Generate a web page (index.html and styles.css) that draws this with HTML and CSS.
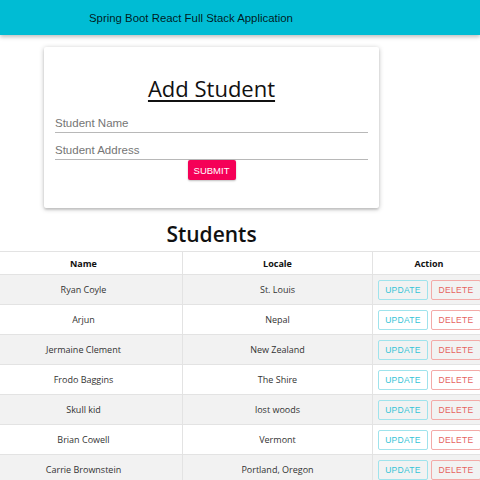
FILE: index.html
```html
<!DOCTYPE html>
<html>
<head>
<meta charset="utf-8">
<link rel="stylesheet" href="styles.css">
</head>
<body>
<header class="appbar">
  <span class="appbar-title">Spring Boot React Full Stack Application</span>
</header>
<main class="content">
  <section class="card">
    <h1 class="card-title">Add Student</h1>
    <div class="field"><span class="field-label">Student Name</span></div>
    <div class="field"><span class="field-label">Student Address</span></div>
    <div class="actions"><button class="submit">SUBMIT</button></div>
  </section>
  <h1 class="list-title">Students</h1>
</main>
<table class="students">
  <thead>
    <tr><th class="c-name">Name</th><th class="c-locale">Locale</th><th class="c-action">Action</th></tr>
  </thead>
  <tbody>
    <tr><td>Ryan Coyle</td><td>St. Louis</td><td class="btns"><button class="btn upd">UPDATE</button><button class="btn del">DELETE</button></td></tr>
    <tr><td>Arjun</td><td>Nepal</td><td class="btns"><button class="btn upd">UPDATE</button><button class="btn del">DELETE</button></td></tr>
    <tr><td>Jermaine Clement</td><td>New Zealand</td><td class="btns"><button class="btn upd">UPDATE</button><button class="btn del">DELETE</button></td></tr>
    <tr><td>Frodo Baggins</td><td>The Shire</td><td class="btns"><button class="btn upd">UPDATE</button><button class="btn del">DELETE</button></td></tr>
    <tr><td>Skull kid</td><td>lost woods</td><td class="btns"><button class="btn upd">UPDATE</button><button class="btn del">DELETE</button></td></tr>
    <tr><td>Brian Cowell</td><td>Vermont</td><td class="btns"><button class="btn upd">UPDATE</button><button class="btn del">DELETE</button></td></tr>
    <tr><td>Carrie Brownstein</td><td>Portland, Oregon</td><td class="btns"><button class="btn upd">UPDATE</button><button class="btn del">DELETE</button></td></tr>
  </tbody>
</table>
</body>
</html>
```
FILE: styles.css
```css
html, body { margin: 0; padding: 0; background: #fff; overflow: hidden; }
body { font-family: "Open Sans", "Noto Sans", sans-serif; color: #212121; }

.appbar {
  height: 35px;
  background: #00bcd4;
  box-shadow: 0 2px 4px rgba(0,0,0,0.25);
  display: flex;
  align-items: center;
  padding-left: 89px;
  position: relative;
}
.appbar-title {
  font-family: "Liberation Sans", Arial, sans-serif;
  font-size: 11.4px;
  color: rgba(0,0,0,0.87);
}

.content {
  width: 423px;
  padding-top: 12px;
}
.card {
  width: 335px;
  height: 161px;
  margin: 0 auto;
  box-sizing: border-box;
  background: #fff;
  border-radius: 2px;
  box-shadow: 0 1px 5px rgba(0,0,0,0.25), 0 2px 2px rgba(0,0,0,0.1);
  padding: 26px 11px 0 11px;
}
.card-title {
  margin: 0 0 7px 0;
  text-align: center;
  font-size: 22px;
  font-weight: 400;
  text-decoration: underline;
  text-underline-offset: 3px;
  line-height: 30px;
  color: #111;
}
.field {
  border-bottom: 1px solid #b8b8b8;
  height: 23px;
  width: 313px;
  display: flex;
  align-items: flex-end;
  padding-bottom: 3px;
  box-sizing: border-box;
}
.field + .field { margin-top: 4px; }
.field-label {
  font-family: "Liberation Sans", Arial, sans-serif;
  font-size: 11.5px;
  color: #757575;
}
.actions { display: flex; justify-content: center; }
.submit {
  background: #f50057;
  color: #fff;
  border: none;
  border-radius: 2px;
  width: 48px;
  height: 20px;
  font-family: "Liberation Sans", Arial, sans-serif;
  font-size: 9.5px;
  box-shadow: 0 1px 2px rgba(0,0,0,0.25);
  padding: 0;
}

.list-title {
  margin: 12px 0 0 0;
  text-align: center;
  font-size: 21px;
  font-weight: 600;
  line-height: 28px;
  color: #111;
}

.students {
  width: 500px;
  margin: 3px 0 0 -15px;
  border-collapse: collapse;
  font-size: 9px;
  color: #333;
}
.students th, .students td {
  text-align: center;
  border-top: 1px solid #e3e3e3;
  padding: 0;
}
.students th + th, .students td + td { border-left: 1px solid #e3e3e3; }
.students th { height: 22px; font-weight: 700; color: #111; }
.students td { height: 29px; }
.c-name { width: 197px; }
.c-locale { width: 189px; }
.students tbody tr:nth-child(odd) { background: #f2f2f2; }
.btns { text-align: left !important; padding-left: 5px !important; white-space: nowrap; }
.btn {
  height: 20px;
  width: 50px;
  background: transparent;
  border-radius: 2px;
  font-family: "Liberation Sans", Arial, sans-serif;
  font-size: 8.5px;
  letter-spacing: 0.3px;
  padding: 0;
  margin-right: 3px;
  vertical-align: middle;
}
.upd { border: 1px solid #9fe3ec; color: #35c4d6; }
.del { border: 1px solid #f3aaa8; color: #e6635f; }
```
